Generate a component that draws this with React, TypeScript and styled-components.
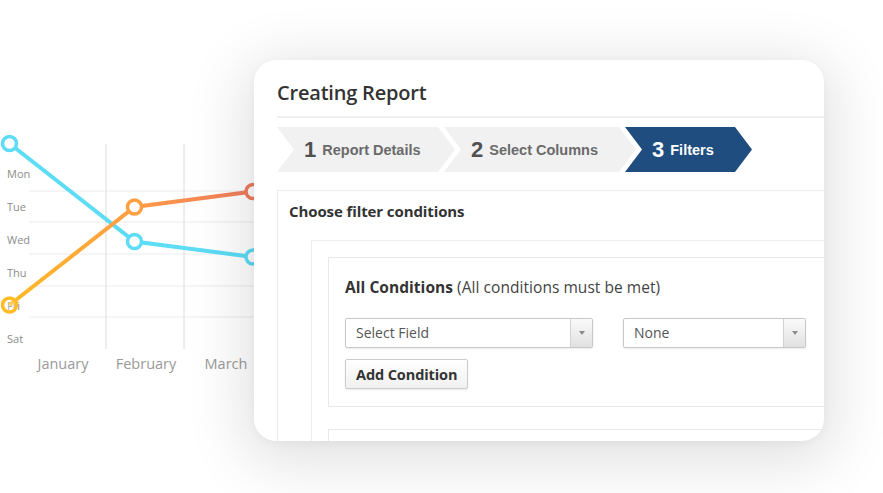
import React from "react";
import styled, { createGlobalStyle } from "styled-components";

const GlobalStyle = createGlobalStyle`
  html, body { margin: 0; padding: 0; background: #ffffff; overflow: hidden; }
  * { box-sizing: border-box; }
`;

const Stage = styled.div`
  display: flex;
  align-items: flex-start;
  width: 883px;
  height: 493px;
  overflow: hidden;
  background: #ffffff;
`;

const ChartArea = styled.div`
  flex: 0 0 262px;
  height: 493px;
  font-family: "Open Sans", "DejaVu Sans", sans-serif;
`;

const Card = styled.section`
  position: relative;
  z-index: 1;
  flex: 0 0 570px;
  height: 381px;
  margin: 60px 0 0 -8px;
  border-radius: 22px;
  background: #ffffff;
  overflow: hidden;
  box-shadow: 0 12px 60px 10px rgba(0, 0, 0, 0.12), 0 2px 10px rgba(0, 0, 0, 0.04);
  font-family: "Open Sans", "DejaVu Sans", sans-serif;
`;

const CardInner = styled.div`
  width: 760px;
  padding: 19px 0 0 23px;
`;

const Title = styled.h1`
  margin: 0;
  font-size: 20px;
  line-height: 28px;
  font-weight: 600;
  letter-spacing: -0.2px;
  color: #333333;
`;

const Divider = styled.div`
  height: 2px;
  margin-top: 9px;
  background: #efefef;
`;

const Steps = styled.div`
  display: flex;
  margin-top: 9px;
  height: 45px;
`;

const Step = styled.div<{ $active?: boolean; $w: number; $first?: boolean }>`
  flex: 0 0 ${(p) => p.$w}px;
  height: 45px;
  margin-left: ${(p) => (p.$first ? 0 : -11)}px;
  display: flex;
  align-items: center;
  gap: 6px;
  padding-left: 27px;
  background: ${(p) => (p.$active ? "#1f4d80" : "#f1f1f1")};
  color: ${(p) => (p.$active ? "#ffffff" : "#6a6a6a")};
  clip-path: polygon(0 0, calc(100% - 17px) 0, 100% 50%, calc(100% - 17px) 100%, 0 100%, 17px 50%);
  font-family: "Liberation Sans", Arial, sans-serif;
`;

const StepNum = styled.span<{ $active?: boolean }>`
  font-size: 22px;
  font-weight: 700;
  color: ${(p) => (p.$active ? "#ffffff" : "#505050")};
  line-height: 1;
`;

const StepLabel = styled.span`
  font-size: 14.5px;
  font-weight: 700;
  line-height: 1;
  margin-top: 2px;
`;

const FilterPanel = styled.div`
  margin-top: 18px;
  border: 1px solid #ececec;
  height: 400px;
`;

const PanelTitle = styled.h2`
  margin: 0;
  padding: 10px 11px 0;
  font-size: 15px;
  line-height: 20px;
  font-weight: 700;
  letter-spacing: -0.1px;
  color: #333333;
`;

const PanelBody = styled.div`
  padding: 19px 0 0 33px;
`;

const GroupBox = styled.div`
  border: 1px solid #eeeeee;
  padding: 16px 0 0 16px;
  height: 300px;
`;

const ConditionBox = styled.div<{ $empty?: boolean }>`
  border: 1px solid #e9e9e9;
  padding: ${(p) => (p.$empty ? "0" : "19px 0 17px 16px")};
  height: ${(p) => (p.$empty ? "60px" : "auto")};
  margin-bottom: 22px;
`;

const CondHeading = styled.div`
  font-size: 15.5px;
  line-height: 20px;
  color: #444444;
  letter-spacing: 0.05px;
  strong {
    font-weight: 700;
    color: #333333;
  }
`;

const SelectRow = styled.div`
  display: flex;
  gap: 30px;
  margin-top: 21px;
`;

const Select = styled.div<{ $w: number }>`
  display: flex;
  width: ${(p) => p.$w}px;
  height: 30px;
  border: 1px solid #c8c8c8;
  border-radius: 2px;
  background: #ffffff;
  box-shadow: 0 1px 2px rgba(0, 0, 0, 0.08);
  overflow: hidden;
`;

const SelectText = styled.span`
  flex: 1;
  padding-left: 10px;
  font-size: 14px;
  line-height: 28px;
  color: #555555;
`;

const SelectArrow = styled.span`
  flex: 0 0 22px;
  display: flex;
  align-items: center;
  justify-content: center;
  border-left: 1px solid #d2d2d2;
  background: linear-gradient(#fafafa, #e1e1e1);
  &::after {
    content: "";
    border-left: 3px solid transparent;
    border-right: 3px solid transparent;
    border-top: 4px solid #8a8a8a;
  }
`;

const AddButton = styled.button`
  display: block;
  margin-top: 11px;
  height: 30px;
  padding: 0 10px;
  border: 1px solid #cccccc;
  border-radius: 2px;
  background: linear-gradient(#ffffff, #f1f1f1);
  box-shadow: 0 1px 2px rgba(0, 0, 0, 0.08);
  font-family: "Open Sans", "DejaVu Sans", sans-serif;
  font-size: 14.5px;
  font-weight: 700;
  letter-spacing: -0.1px;
  color: #333333;
`;

const days = ["Mon", "Tue", "Wed", "Thu", "Fri", "Sat"];
const dayY = [174, 207, 240, 273, 306, 339];
const gridY = [191, 222, 254, 286, 317];
const months = [
  { label: "January", x: 63 },
  { label: "February", x: 146 },
  { label: "March", x: 226 },
];

function Chart() {
  return (
    <svg width="262" height="493" viewBox="0 0 262 493">
      <defs>
        <linearGradient id="og" x1="9" y1="0" x2="253" y2="0" gradientUnits="userSpaceOnUse">
          <stop offset="0" stopColor="#ffbb26" />
          <stop offset="0.5" stopColor="#ff9d45" />
          <stop offset="1" stopColor="#ef7b5e" />
        </linearGradient>
      </defs>
      {gridY.map((y) => (
        <line key={y} x1="29" y1={y} x2="262" y2={y} stroke="#ececec" strokeWidth="1" />
      ))}
      <line x1="106" y1="144" x2="106" y2="349" stroke="#dcdcdc" strokeWidth="1" />
      <line x1="184" y1="144" x2="184" y2="349" stroke="#dcdcdc" strokeWidth="1" />
      {days.map((d, i) => (
        <text key={d} x="7" y={dayY[i] + 4} fontSize="11" fill="#8c8c8c">
          {d}
        </text>
      ))}
      {months.map((m) => (
        <text key={m.label} x={m.x} y="369" fontSize="14.5" fill="#9a9a9a" textAnchor="middle">
          {m.label}
        </text>
      ))}
      <polyline points="9.5,143.5 134.5,241.5 253,257" fill="none" stroke="#5cdcf5" strokeWidth="4" />
      <polyline points="9.5,305 134.5,207 253,191.5" fill="none" stroke="url(#og)" strokeWidth="4" />
      <circle cx="9.5" cy="143.5" r="7" fill="#fff" stroke="#5cdcf5" strokeWidth="3.5" />
      <circle cx="134.5" cy="241.5" r="7" fill="#fff" stroke="#5cdcf5" strokeWidth="3.5" />
      <circle cx="253" cy="257" r="7" fill="#fff" stroke="#5cdcf5" strokeWidth="3.5" />
      <circle cx="9.5" cy="305" r="7" fill="rgba(255,255,255,0.25)" stroke="#ffbb26" strokeWidth="3.5" />
      <circle cx="134.5" cy="207" r="7" fill="#fff" stroke="#ffa040" strokeWidth="3.5" />
      <circle cx="253" cy="191.5" r="7" fill="#fff" stroke="#ef7b5e" strokeWidth="3.5" />
    </svg>
  );
}

export default function App() {
  return (
    <>
      <GlobalStyle />
      <Stage>
        <ChartArea>
          <Chart />
        </ChartArea>
        <Card>
          <CardInner>
            <Title>Creating Report</Title>
            <Divider />
            <Steps>
              <Step $first $w={178}>
                <StepNum>1</StepNum>
                <StepLabel>Report Details</StepLabel>
              </Step>
              <Step $w={192}>
                <StepNum>2</StepNum>
                <StepLabel>Select Columns</StepLabel>
              </Step>
              <Step $active $w={127}>
                <StepNum $active>3</StepNum>
                <StepLabel>Filters</StepLabel>
              </Step>
            </Steps>
            <FilterPanel>
              <PanelTitle>Choose filter conditions</PanelTitle>
              <PanelBody>
                <GroupBox>
                  <ConditionBox>
                    <CondHeading>
                      <strong>All Conditions</strong> (All conditions must be met)
                    </CondHeading>
                    <SelectRow>
                      <Select $w={248}>
                        <SelectText>Select Field</SelectText>
                        <SelectArrow />
                      </Select>
                      <Select $w={183}>
                        <SelectText>None</SelectText>
                        <SelectArrow />
                      </Select>
                    </SelectRow>
                    <AddButton>Add Condition</AddButton>
                  </ConditionBox>
                  <ConditionBox $empty />
                </GroupBox>
              </PanelBody>
            </FilterPanel>
          </CardInner>
        </Card>
      </Stage>
    </>
  );
}
